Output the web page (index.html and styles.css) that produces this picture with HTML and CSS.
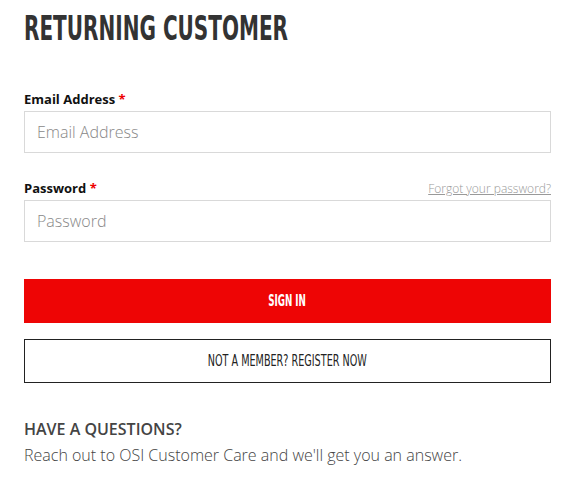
FILE: index.html
```html
<!DOCTYPE html>
<html>
<head>
<meta charset="utf-8">
<link rel="stylesheet" href="styles.css">
</head>
<body>
<div class="page">
  <h1 class="title"><span class="title-text">RETURNING CUSTOMER</span></h1>
  <form class="form">
    <div class="field">
      <div class="label-row"><label class="label">Email Address <span class="req">*</span></label></div>
      <input class="input" type="text" placeholder="Email Address">
    </div>
    <div class="field">
      <div class="label-row"><label class="label">Password <span class="req">*</span></label><a class="forgot" href="#">Forgot your password?</a></div>
      <input class="input" type="password" placeholder="Password">
    </div>
    <button class="btn btn-primary" type="button"><span class="btn-text">SIGN IN</span></button>
    <button class="btn btn-outline" type="button"><span class="btn-text">NOT A MEMBER? REGISTER NOW</span></button>
  </form>
  <div class="help">
    <h2 class="help-title">HAVE A QUESTIONS?</h2>
    <p class="help-text">Reach out to OSI Customer Care and we'll get you an answer.</p>
  </div>
</div>
</body>
</html>
```
FILE: styles.css
```css
* { box-sizing: border-box; }
html, body { margin: 0; padding: 0; background: #fff; }
body { font-family: "Open Sans", "DejaVu Sans", sans-serif; color: #444; }
.page { padding: 0 14px 0 24px; }
.title { margin: 0; padding-top: 10px; height: 62px; font-family: "DejaVu Sans", sans-serif; font-stretch: condensed; font-weight: 700; font-size: 34px; line-height: 36px; color: #333; }
.title-text { display: inline-block; transform: scaleX(0.655); transform-origin: left center; white-space: nowrap; }
.form { display: flex; flex-direction: column; padding-top: 28px; }
.field { display: flex; flex-direction: column; margin-bottom: 26px; }
.label-row { display: flex; justify-content: space-between; align-items: baseline; height: 21px; }
.label { font-weight: 700; font-size: 13px; color: #111; line-height: 19px; }
.req { color: #e00; }
.forgot { font-size: 12px; font-weight: 300; color: #999; text-decoration: underline; line-height: 19px; }
.input { height: 42px; width: 100%; border: 1px solid #d9d9d9; padding: 0 12px; font-family: "Open Sans", sans-serif; font-size: 16px; font-weight: 300; color: #444; background: #fff; outline: none; }
.input::placeholder { color: #888; font-weight: 300; }
.btn { height: 44px; width: 100%; display: flex; align-items: center; justify-content: center; font-family: "DejaVu Sans", sans-serif; font-stretch: condensed; font-size: 15px; cursor: pointer; padding: 0; }
.btn-text { display: inline-block; white-space: nowrap; }
.btn-primary { background: #ee0505; border: none; color: #fff; font-weight: 700; margin-top: 11px; }
.btn-primary .btn-text { transform: scaleX(0.65); }
.btn-outline { background: #fff; border: 1px solid #222; color: #222; font-weight: 400; margin-top: 16px; }
.btn-outline .btn-text { transform: scaleX(0.715); }
.help { padding-top: 35px; }
.help-title { margin: 0; font-size: 16px; font-weight: 600; color: #444; line-height: 22px; }
.help-text { margin: 4px 0 0; font-size: 16px; font-weight: 300; color: #444; line-height: 22px; }
```
